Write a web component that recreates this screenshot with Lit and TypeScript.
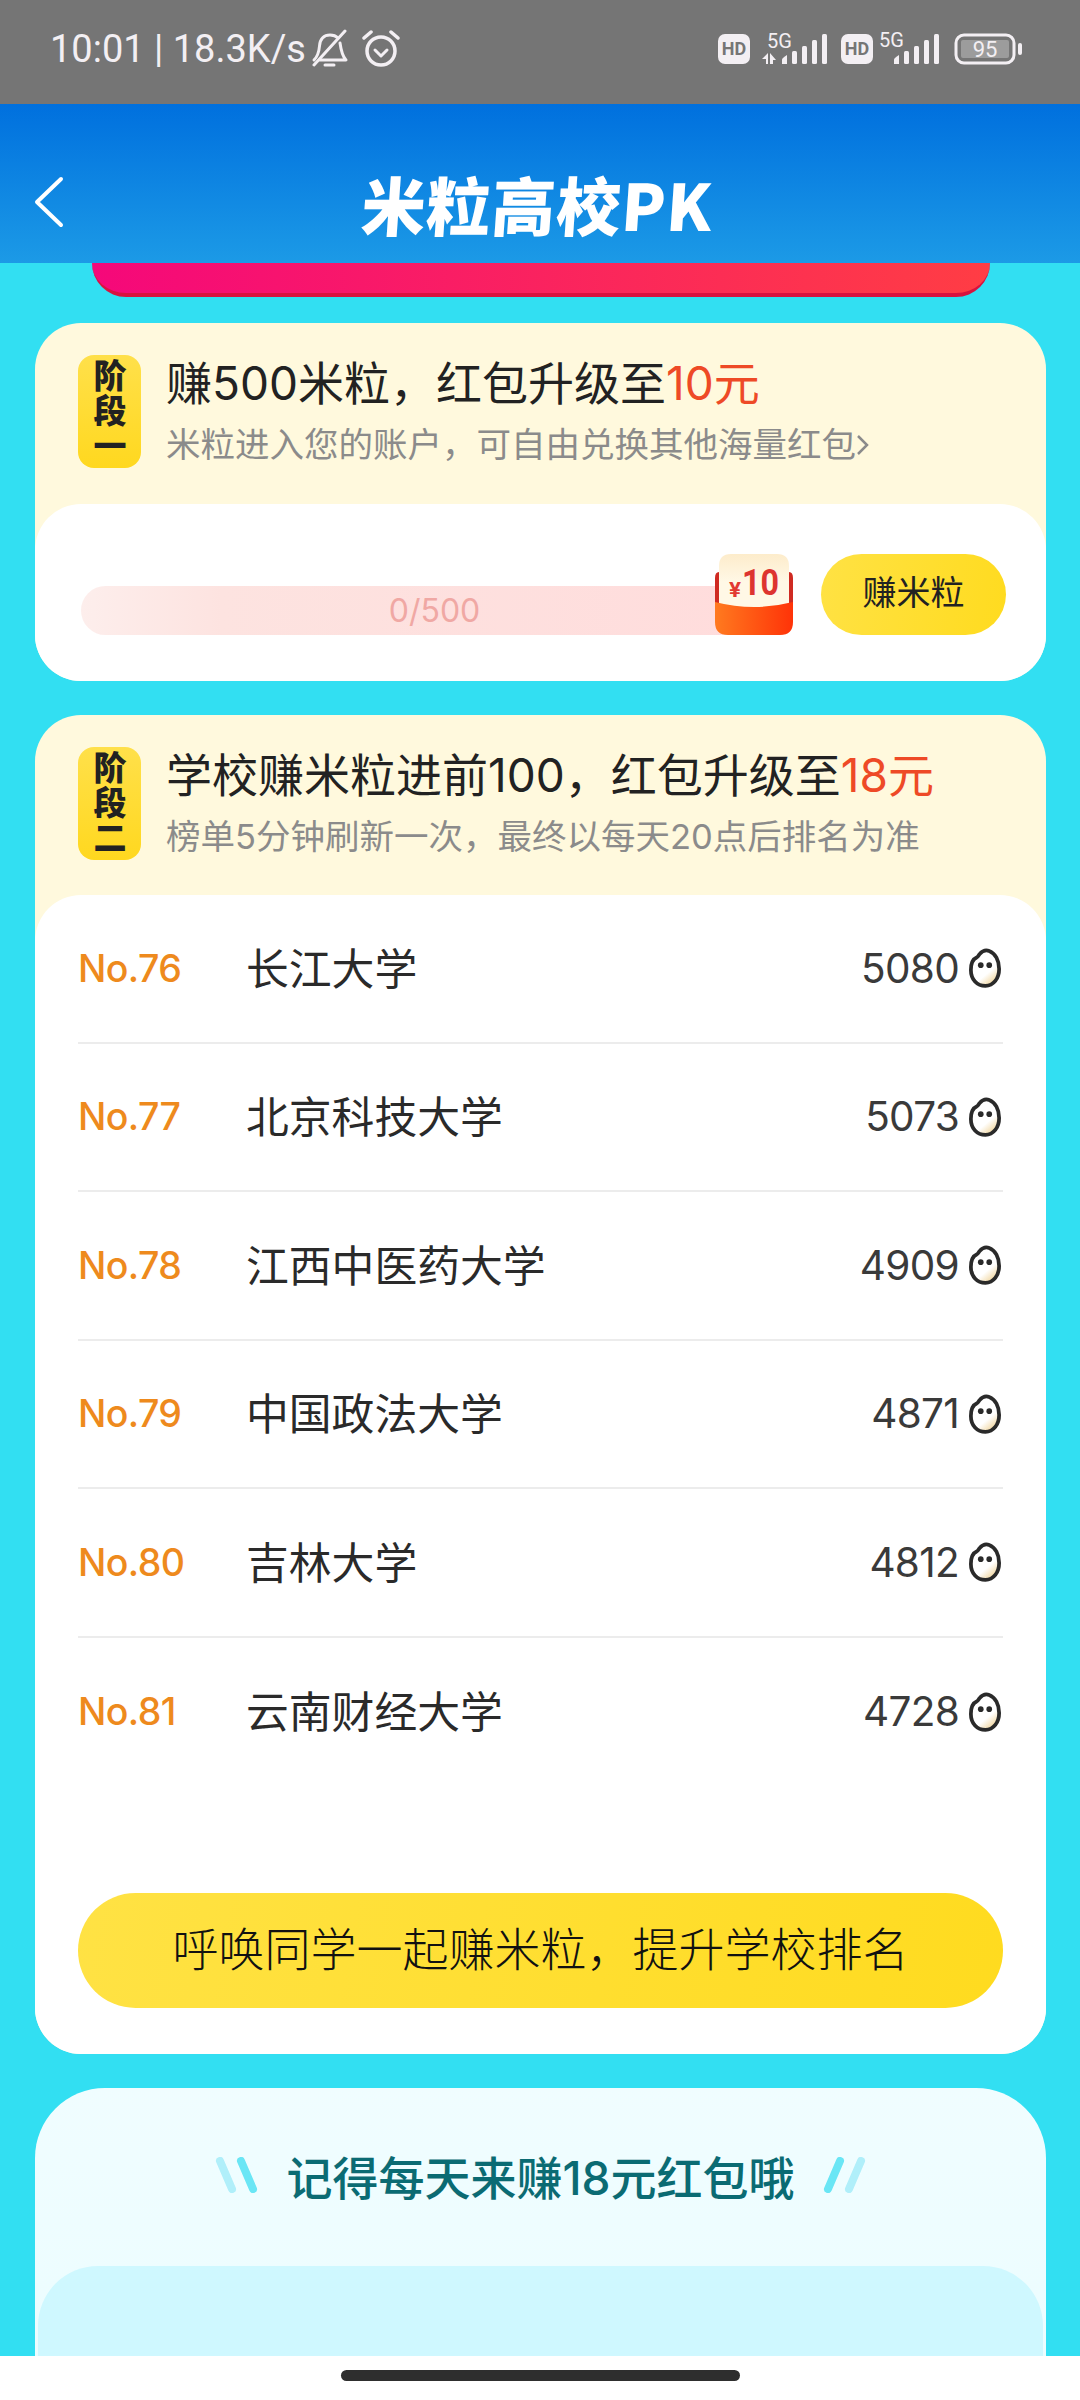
import { LitElement, html, css, svg } from "lit";
import { customElement } from "lit/decorators.js";

const C = "\uFF0C";
const rows = [
  ["No.76", "长江大学", "5080"],
  ["No.77", "北京科技大学", "5073"],
  ["No.78", "江西中医药大学", "4909"],
  ["No.79", "中国政法大学", "4871"],
  ["No.80", "吉林大学", "4812"],
  ["No.81", "云南财经大学", "4728"],
];
const title1 = `赚500米粒${C}红包升级至`;
const sub1 = `米粒进入您的账户${C}可自由兑换其他海量红包`;
const title2 = `学校赚米粒进前100${C}红包升级至`;
const sub2 = `榜单5分钟刷新一次${C}最终以每天20点后排名为准`;
const callText = `呼唤同学一起赚米粒${C}提升学校排名`;

const rice = svg`<svg class="rice" viewBox="0 0 34 42" width="32" height="40">
  <defs><linearGradient id="riceFill" x1="0.3" y1="0.4" x2="0.7" y2="1"><stop offset="0.5" stop-color="#fff"/><stop offset="1" stop-color="#f0d49a"/></linearGradient></defs>
  <path d="M11 6.5C14 3 18 1.5 21.5 3C28 5.5 32 13 32 22C32 32 26 40 17.500 40C8.500 40 2 33 2 23C2 16 5 11 8.500 9.500C9.500 9 10 7.800 11 6.500Z" fill="url(#riceFill)" stroke="#2a2a2a" stroke-width="4"/>
  <circle cx="12.500" cy="18" r="3" fill="#2a2a2a"/><circle cx="21.500" cy="18" r="3" fill="#2a2a2a"/>
</svg>`;

const bars = (x: number) => svg`
  <path d="M${x} 32V27.500Q${x} 26 ${x + 5} 23V32Z" fill="#f3eff3"/>
  <rect x="${x + 10}" y="19" width="5" height="13" rx="1.500" fill="#f3eff3"/>
  <rect x="${x + 20}" y="14" width="5" height="18" rx="1.500" fill="#f3eff3"/>
  <rect x="${x + 30}" y="8" width="5" height="24" rx="1.500" fill="#f3eff3"/>
  <rect x="${x + 40}" y="2" width="5" height="30" rx="1.500" fill="#f3eff3"/>`;

@customElement("app-root")
export class AppRoot extends LitElement {
  static styles = css`
    :host {
      display: block;
      width: 1080px;
      height: 2400px;
      font-family: Inter, "Noto Sans CJK SC", sans-serif;
      color: #222;
    }
    * { box-sizing: border-box; }
    .page { width: 1080px; height: 2400px; display: flex; flex-direction: column; background: #32dff2; overflow: hidden; }
    .status { height: 104px; flex: none; background: #757575; display: flex; align-items: center; justify-content: space-between; padding: 0 56px 6px 50px; color: #f3eff3; }
    .st-left, .st-right { display: flex; align-items: center; }
    .clock { font-family: Roboto, sans-serif; font-size: 38px; line-height: 44px; margin-right: 5px; }
    .alarm { margin-left: 13px; }
    .hd { width: 32px; height: 30px; border-radius: 7px; background: #f3eff3; color: #757575; font: 700 18px/30px Roboto, sans-serif; text-align: center; }
    .s1 { margin: -6px 0 0 2px; }
    .hd2 { margin-left: 11px; }
    .s2 { margin: -6px 0 0 1px; }
    .bat { margin-left: 12px; }
    .nav { height: 159px; flex: none; background: linear-gradient(180deg, #0070de, #1c9ae6); display: flex; align-items: center; justify-content: center; position: relative; }
    .back { position: absolute; left: 33px; top: 72px; }
    .logo { font-family: "Noto Sans CJK SC", sans-serif; font-weight: 900; font-size: 64px; line-height: 70px; color: #fff; margin: 38px 0 0 -5px; letter-spacing: 1px; transform: skewX(-4deg); }
    .main { flex: 1; min-height: 0; overflow: hidden; display: flex; flex-direction: column; }
    .redbar { flex: none; height: 34px; margin: 0 90px 0 92px; border-radius: 0 0 48px 48px; background: linear-gradient(90deg, #f5087a, #ff3d44); border-bottom: 4px solid #d8123f; }
    .card { flex: none; margin: 26px 34px 0 35px; border-radius: 46px; background: #fff9dd; overflow: hidden; }
    .card + .card { margin-top: 34px; }
    .head { height: 181px; padding: 32px 0 0 43px; display: flex; gap: 25px; }
    .head2 { height: 183px; }
    .badge { width: 63px; height: 113px; border-radius: 16px; background: linear-gradient(180deg, #ffe04a, #ffd81f); display: flex; align-items: center; justify-content: center; writing-mode: vertical-rl; font-family: "Noto Sans CJK SC", sans-serif; font-weight: 900; font-size: 33px; line-height: 33px; letter-spacing: 2px; color: #222; }
    .h-title { font-size: 46px; font-weight: 400; line-height: 56px; white-space: nowrap; color: #222; }
    .h-title b { font-weight: 400; color: #ee4a26; }
    .h-sub { margin-top: 10px; display: flex; align-items: center; font-size: 34.500px; line-height: 48px; color: #8b8b8b; white-space: nowrap; }
    .panel { background: #fff; border-radius: 46px 46px 0 0; }
    .p1 { height: 177px; padding: 50px 40px 0 46px; display: flex; justify-content: space-between; }
    .track { position: relative; width: 712px; height: 81px; }
    .bar { position: absolute; left: 0; right: 10px; bottom: 0; height: 49px; border-radius: 25px 0 0 25px; background: linear-gradient(90deg, #fdeeec, #fde3e0 20%, #ffdcdc); color: #f0a8a4; font-size: 32px; line-height: 50px; text-align: center; padding-left: 5px; }
    .gift { position: absolute; right: 0; top: 0; }
    .earn { width: 185px; height: 81px; border-radius: 41px; background: linear-gradient(100deg, #ffe244, #ffdb1f); font-size: 34px; line-height: 78px; text-align: center; color: #222; }
    .list { margin: -3px 43px 0; }
    .row { height: 148.500px; display: flex; align-items: center; border-bottom: 2px solid #ececec; }
    .row:last-child { border-bottom: none; }
    .rank { width: 168px; flex: none; font-size: 37.500px; font-weight: 500; color: #ee8a1d; letter-spacing: -0.600px; }
    .name { flex: 1; font-size: 42.800px; color: #2a2a2a; padding-bottom: 5px; }
    .num { font-size: 40.500px; color: #3a3a3a; letter-spacing: -0.700px; }
    .rice { margin: 0 2px 0 10px; display: block; }
    .call { margin: 107px 0 45px 43px; height: 115px; width: 925px; border-radius: 58px; background: linear-gradient(100deg, #ffe244, #ffdb1f); font-family: "Liberation Serif", "Noto Sans CJK SC", serif; font-weight: 300; font-size: 46px; line-height: 115px; text-align: center; color: #111; }
    .tail { height: 1px; }
    .card3 { height: 400px; background: linear-gradient(180deg, #f0fdff, #eafdff); border-radius: 70px 70px 0 0; padding: 0 3px; }
    .t3 { height: 178px; display: flex; align-items: center; justify-content: center; gap: 27px; font-size: 46px; font-weight: 500; color: #0b6b73; padding-bottom: 4px; }
    .inner3 { height: 300px; border-radius: 60px 60px 0 0; background: #cff8ff; }
    .home { height: 44px; flex: none; background: #fff; display: flex; justify-content: center; padding-top: 14px; }
    .pill { width: 399px; height: 11px; border-radius: 6px; background: #2e2e2e; }
  `;

  render() {
    return html`<div class="page">
      <div class="status">
        <div class="st-left">
          <span class="clock">10:01 | 18.3K/s</span>
          <svg width="38" height="40" viewBox="0 0 38 40" fill="none" stroke="#f3eff3" stroke-width="3" stroke-linecap="round" stroke-linejoin="round">
            <path d="M3 31C7 27 8 23 8.500 17C9 10 13 6 19 6C22 6 25 7 27 9"/>
            <path d="M29 14C30 21 31 27 35 31H9"/>
            <path d="M3 36L34 2"/>
            <path d="M14 36H23"/>
          </svg>
          <svg class="alarm" width="38" height="38" viewBox="0 0 38 38" fill="none" stroke="#f3eff3" stroke-width="3.500" stroke-linecap="round" stroke-linejoin="round">
            <circle cx="19" cy="21" r="14"/>
            <path d="M2 8L9 2M36 8L29 2"/>
            <path d="M13 20L19 26L25 20" stroke-width="3"/>
          </svg>
        </div>
        <div class="st-right">
          <div class="hd">HD</div>
          <svg class="s1" width="78" height="40" viewBox="0 -6 78 40">
            <text x="15" y="16" font-family="Roboto, sans-serif" font-size="20" fill="#f3eff3">5G</text>
            <path d="M10 27L16 21V32H14V27ZM18 21L24 28H21V32H18Z" fill="#f3eff3"/>
            ${bars(30)}
          </svg>
          <div class="hd hd2">HD</div>
          <svg class="s2" width="68" height="40" viewBox="0 -6 68 40">
            <text x="5" y="15" font-family="Roboto, sans-serif" font-size="20" fill="#f3eff3">5G</text>
            ${bars(20)}
          </svg>
          <svg class="bat" width="70" height="32" viewBox="0 0 70 32">
            <rect x="2" y="2" width="58" height="28" rx="8" fill="none" stroke="#f3eff3" stroke-width="3"/>
            <rect x="7" y="7" width="48" height="18" rx="2" fill="#9c9c9c"/>
            <rect x="64" y="10" width="4" height="12" rx="2" fill="#f3eff3"/>
            <text x="31" y="24" text-anchor="middle" font-family="Roboto, sans-serif" font-size="22" fill="#f3eff3">95</text>
          </svg>
        </div>
      </div>
      <div class="nav">
        <svg class="back" width="32" height="52" viewBox="0 0 32 52" fill="none" stroke="#fff" stroke-width="4" stroke-linecap="round" stroke-linejoin="round"><path d="M28 3L4 26L28 49"/></svg>
        <div class="logo">米粒高校PK</div>
      </div>
      <div class="main">
        <div class="redbar"></div>
        <section class="card">
          <div class="head">
            <div class="badge">阶段一</div>
            <div>
              <div class="h-title">${title1}<b>10元</b></div>
              <div class="h-sub">${sub1}<svg width="14" height="24" viewBox="0 0 14 24" fill="none" stroke="#8b8b8b" stroke-width="2.500"><path d="M2 3L11 12L2 21"/></svg></div>
            </div>
          </div>
          <div class="panel p1">
            <div class="track">
              <div class="bar">0/500</div>
              <svg class="gift" width="78" height="81" viewBox="0 0 78 81">
                <defs><linearGradient id="gf" x1="0" x2="1"><stop offset="0" stop-color="#ff7a1f"/><stop offset="1" stop-color="#ff3308"/></linearGradient>
                <linearGradient id="gc" x1="0" x2="0" y1="0" y2="1"><stop offset="0" stop-color="#fdeccb"/><stop offset="0.5" stop-color="#fff8e6"/></linearGradient></defs>
                <path d="M0 24Q0 18 4 18H74Q78 18 78 24V56H0Z" fill="#cf2a22"/>
                <path d="M4 12Q4 0 16 0H62Q74 0 74 12V56H4Z" fill="url(#gc)"/>
                <text x="14" y="43" font-family="Roboto, sans-serif" font-weight="700" font-size="20" textLength="12" lengthAdjust="spacingAndGlyphs" fill="#e23a32">¥</text>
                <text x="27" y="41" font-family="Roboto, sans-serif" font-weight="700" font-size="36" textLength="37" lengthAdjust="spacingAndGlyphs" fill="#dd3430">10</text>
                <path d="M0 48Q39 58 78 48V68Q78 81 65 81H13Q0 81 0 68Z" fill="url(#gf)"/>
              </svg>
            </div>
            <div class="earn">赚米粒</div>
          </div>
        </section>
        <section class="card">
          <div class="head head2">
            <div class="badge">阶段二</div>
            <div>
              <div class="h-title">${title2}<b>18元</b></div>
              <div class="h-sub">${sub2}</div>
            </div>
          </div>
          <div class="panel">
            <div class="list">
              ${rows.map(
                (r) => html`<div class="row">
                  <span class="rank">${r[0]}</span>
                  <span class="name">${r[1]}</span>
                  <span class="num">${r[2]}</span>
                  ${rice}
                </div>`
              )}
            </div>
            <div class="call">${callText}</div>
            <div class="tail"></div>
          </div>
        </section>
        <section class="card card3">
          <div class="t3">
            <svg width="44" height="36" viewBox="0 0 44 36" fill="none" stroke-width="8" stroke-linecap="round"><path d="M5 4L17 32" stroke="#b0effa"/><path d="M26 4L38 32" stroke="#6ae6f5"/></svg>
            <span>记得每天来赚18元红包哦</span>
            <svg width="44" height="36" viewBox="0 0 44 36" fill="none" stroke-width="8" stroke-linecap="round"><path d="M18 4L6 32" stroke="#6ae6f5"/><path d="M39 4L27 32" stroke="#b0effa"/></svg>
          </div>
          <div class="inner3"></div>
        </section>
      </div>
      <div class="home"><div class="pill"></div></div>
    </div>`;
  }
}
